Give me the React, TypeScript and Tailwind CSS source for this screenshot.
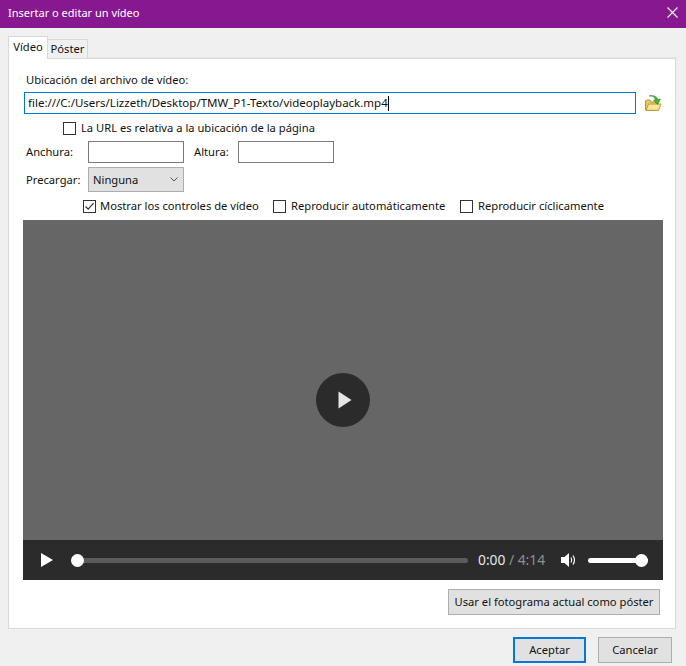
function Check({ checked = false }: { checked?: boolean }) {
  return (
    <span className="grid h-[13px] w-[13px] shrink-0 place-items-center border border-[#333333] bg-white">
      {checked && (
        <svg width="11" height="11" viewBox="0 0 11 11" fill="none">
          <path d="M1.5 5.5 L4.2 8.2 L9.5 2.2" stroke="#333333" strokeWidth="1.2" />
        </svg>
      )}
    </span>
  );
}

function FolderIcon() {
  return (
    <svg width="18" height="18" viewBox="0 0 18 18" fill="none">
      <path d="M1.5 7 L1.5 15 Q1.5 16.5 3 16.5 L14 16.5 L14 8 L7 8 L6 6 L2.5 6 Z" fill="#e9c765" stroke="#b8912c" />
      <path d="M2 16.3 L4.5 10 L17 10 L14.5 16.3 Z" fill="#f9e59a" stroke="#c09a35" />
      <path d="M5 2 Q10 1 11.5 6 L9.5 6 L13.5 10.5 L16.5 5 L14 5.6 Q12 0.5 5 2 Z" fill="#46b32c" stroke="#2f8a1d" strokeWidth="0.6" />
    </svg>
  );
}

function VolumeIcon() {
  return (
    <svg width="16" height="16" viewBox="0 0 16 16" fill="none">
      <path d="M0 5 L3.5 5 L8 1 L8 15 L3.5 11 L0 11 Z" fill="#ffffff" />
      <path d="M10 5.5 Q11.5 8 10 10.5" stroke="#ffffff" strokeWidth="1.2" />
      <path d="M12 3.5 Q15 8 12 12.5" stroke="#ffffff" strokeWidth="1.2" />
    </svg>
  );
}

function VideoPreview() {
  return (
    <div className="ml-[14px] flex h-[360px] w-[640px] flex-col bg-[#666666]">
      <div className="grid flex-1 place-items-center pt-10">
        <span className="grid h-[54px] w-[54px] place-items-center rounded-full bg-[#2b2b2b]">
          <svg className="ml-[3px]" width="14" height="18" viewBox="0 0 14 18">
            <path d="M0.5 0.5 L13.5 9 L0.5 17.5 Z" fill="#e6e6e6" />
          </svg>
        </span>
      </div>
      <div className="flex h-10 items-center bg-[#2b2b2b] text-white">
        <svg className="ml-[18px]" width="12" height="14" viewBox="0 0 12 14">
          <path d="M0 0 L12 7 L0 14 Z" fill="#ffffff" />
        </svg>
        <div className="relative ml-[18px] h-[5px] w-[397px] rounded-full bg-[#5c5c5c]">
          <span className="absolute top-[-4px] left-0 h-[13px] w-[13px] rounded-full bg-white" />
        </div>
        <span className="ml-[10px] w-[67px] text-[13.8px] whitespace-nowrap text-[#e6e6e6]">
          0:00 <span className="text-[#8f8f8f]">/ 4:14</span>
        </span>
        <span className="ml-[16px] flex">
          <VolumeIcon />
        </span>
        <div className="relative ml-[11px] h-[5px] w-[60px] rounded-full bg-white">
          <span className="absolute top-[-4px] right-0 h-[13px] w-[13px] rounded-full bg-white" />
        </div>
      </div>
    </div>
  );
}

export default function App() {
  return (
    <div className="flex h-[666px] w-[686px] flex-col overflow-hidden bg-[#f0f0f0] font-['Noto_Sans',sans-serif] text-[11.2px] leading-[16px] text-[#111111]">
      <div className="flex h-[28px] shrink-0 items-center justify-between bg-[#87188f] pr-[8px] pb-[2px] pl-[8px] text-[11px] text-white">
        <span>Insertar o editar un vídeo</span>
        <svg className="-mt-[2px]" width="11" height="11" viewBox="0 0 11 11">
          <path d="M0.5 0.5 L10.5 10.5 M10.5 0.5 L0.5 10.5" stroke="#ffffff" strokeWidth="1.1" />
        </svg>
      </div>

      <div className="mx-[8px] mt-[8px] flex h-[22px] items-end border-b border-[#e6e6e6]">
        <div className="relative z-10 -mb-[2px] flex h-[23px] w-[40px] items-center justify-center border border-b-0 border-[#d9d9d9] bg-white pb-[2px]">
          Vídeo
        </div>
        <div className="-mb-px flex h-[19px] w-[40px] items-center justify-center border border-b-0 border-l-0 border-[#d9d9d9] bg-[#f0f0f0]">
          Póster
        </div>
      </div>

      <div className="mr-[10px] ml-[8px] flex h-[571px] flex-col border border-[#d9d9d9] bg-white">
        <label className="mt-[12px] ml-[17px] h-[17px] leading-[17px]">Ubicación del archivo de vídeo:</label>
        <div className="mt-[4px] ml-[15px] flex items-center">
          <div className="flex h-[22px] w-[612px] items-center border border-[#0078d7] pl-[3px] text-[11.5px]">
            <span>file:///C:/Users/Lizzeth/Desktop/TMW_P1-Texto/videoplayback.mp4</span>
            <span className="h-[15px] w-px bg-black" />
          </div>
          <span className="ml-[8px] flex">
            <FolderIcon />
          </span>
        </div>

        <div className="mt-[6px] ml-[54px] flex items-center gap-[5px]">
          <Check />
          <span>La URL es relativa a la ubicación de la página</span>
        </div>

        <div className="mt-[5px] ml-[17px] flex items-center">
          <span className="w-[62px]">Anchura:</span>
          <span className="h-[22px] w-[96px] border border-[#7a7a7a] bg-white" />
          <span className="ml-[10px] w-[44px]">Altura:</span>
          <span className="h-[22px] w-[96px] border border-[#7a7a7a] bg-white" />
        </div>

        <div className="mt-[4px] ml-[17px] flex items-center">
          <span className="w-[62px]">Precargar:</span>
          <div className="flex h-[25px] w-[96px] items-center justify-between border border-[#adadad] bg-[#e1e1e1] pr-[5px] pl-[4px]">
            <span>Ninguna</span>
            <svg width="8" height="5" viewBox="0 0 8 5" fill="none">
              <path d="M0.5 0.5 L4 4 L7.5 0.5" stroke="#555555" />
            </svg>
          </div>
        </div>

        <div className="mt-[6px] ml-[74px] flex items-center">
          <Check checked />
          <span className="ml-[4px] w-[173px]">Mostrar los controles de vídeo</span>
          <Check />
          <span className="ml-[5px] w-[169px]">Reproducir automáticamente</span>
          <Check />
          <span className="ml-[5px]">Reproducir cíclicamente</span>
        </div>

        <div className="mt-[6px]">
          <VideoPreview />
        </div>

        <div className="mt-[9px] flex justify-end pr-[15px]">
          <button type="button" className="h-[26px] w-[212px] border border-[#adadad] bg-[#e1e1e1] whitespace-nowrap">
            Usar el fotograma actual como póster
          </button>
        </div>
      </div>

      <div className="mt-[8px] flex justify-end gap-[12px] pr-[14px]">
        <button type="button" className="h-[26px] w-[73px] border-2 border-[#0078d7] bg-[#e1e1e1]">
          Aceptar
        </button>
        <button type="button" className="h-[26px] w-[74px] border border-[#adadad] bg-[#e1e1e1]">
          Cancelar
        </button>
      </div>
    </div>
  );
}
